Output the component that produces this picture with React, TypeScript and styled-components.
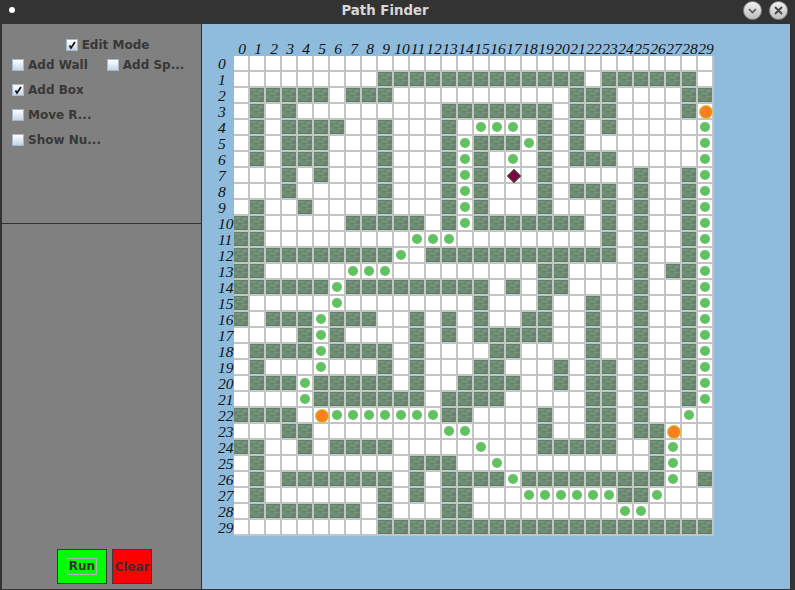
import React, { FC } from "react";
import styled, { createGlobalStyle } from "styled-components";

const MAZE = [
  "..............................",
  ".........WWWWWWWWWWWWW.WWWWWW.",
  ".WWWWW.WWW...........WWW....WW",
  ".W.W.........WWWWWWW.WWW....WO",
  ".W.WWWW..W...W.ooo.W.W.W.....o",
  ".W.WWW...W...WoWWWoW.W.......o",
  ".W.WWW...W...WoW.o.W.WWW.....o",
  "...W.W...W...WoW.D.W.....W..Wo",
  "...W.....W...WoW...W.WWW.W..Wo",
  ".W..W....W...WoW...W...W.W..Wo",
  "WW.....WWWWW.WoWWWWWWW.W.W..Wo",
  "WW.........ooo.........W.W..Wo",
  "WWWWWWWWWWo.WWWWWWWWWWWW.W..Wo",
  "WW.....ooo.........WW....W.WWo",
  "WWWWWWoWWWWWWWWW.W.WW....W..Wo",
  "W.....o........W...W..W..W..Wo",
  "W.WWWoWWW..W.W.W..WW..W..W..Wo",
  "....WoW....W.W.WWWWW..W..W..Wo",
  ".WWWWoWWWW.W....WW....W..W..Wo",
  ".W...o...W.W...WW...W.WW.W..Wo",
  ".WWWoWWWWW.W..WWWW..W.WW.W..Wo",
  "....oWWWWWWW.WWWW.....WW.W..Wo",
  "WWWW.OoooooooWW....W..WW.W..o.",
  "...WW........oo....W..WW.WWO..",
  "WW..W.WWWW.....o...WWWWW..Wo..",
  ".W.........WWW..o.........Wo..",
  ".W.WWWWWWW.W.WWWWoWWWWWWWWWo.W",
  ".W.......W.W.WW...ooooooWWo...",
  ".WWWWWWW.W...WW.........oo....",
  ".........WWWWWWWWWWWWWWWWWWWWW",
];

const GlobalStyle = createGlobalStyle`
  html, body {
    margin: 0;
    padding: 0;
    background: #333333;
  }
`;

const Frame = styled.div`
  width: 795px;
  height: 590px;
  display: flex;
  flex-direction: column;
  background: #333333;
  font-family: "DejaVu Sans", sans-serif;
  overflow: hidden;
`;

const TitleBar = styled.div`
  height: 24px;
  flex: none;
  display: flex;
  align-items: center;
  justify-content: space-between;
  padding: 0 7px 4px 9px;
  box-sizing: border-box;
`;

const MenuDot = styled.span`
  width: 6px;
  height: 6px;
  border-radius: 50%;
  background: #ffffff;
`;

const Title = styled.span`
  font-size: 13.3px;
  font-weight: 700;
  color: #d8d8d8;
  margin-left: 12px;
`;

const WindowButtons = styled.div`
  display: flex;
  gap: 7px;
`;

const WindowButton = styled.span`
  width: 19px;
  height: 19px;
  border-radius: 50%;
  background: linear-gradient(#f2f2f2, #bcbcbc);
  border: 1px solid #8c8c8c;
  box-sizing: border-box;
  display: flex;
  align-items: center;
  justify-content: center;
`;

const Body = styled.div`
  flex: 1;
  display: flex;
  padding: 0 5px 1px 2px;
  min-height: 0;
`;

const Sidebar = styled.div`
  width: 199px;
  flex: none;
  display: flex;
  flex-direction: column;
  border-right: 1px solid #2e2e2e;
`;

const OptionsPanel = styled.div`
  height: 200px;
  flex: none;
  box-sizing: border-box;
  background: #808080;
  border-bottom: 1px solid #333333;
  padding: 14px 10px 0;
  display: flex;
  flex-direction: column;
`;

const OptionRow = styled.div<{ $center?: boolean }>`
  height: ${(p) => (p.$center ? 14 : 25)}px;
  display: flex;
  align-items: center;
  justify-content: ${(p) => (p.$center ? "center" : "flex-start")};
  padding-left: ${(p) => (p.$center ? 12 : 0)}px;
  gap: 19px;
`;

const Option = styled.label`
  display: flex;
  align-items: center;
  gap: 4px;
  font-size: 12px;
  font-weight: 700;
  color: #383838;
  white-space: nowrap;
`;

const CheckBox = styled.span`
  width: 12px;
  height: 12px;
  box-sizing: border-box;
  border: 1px solid #a6b8ca;
  background: linear-gradient(#ffffff, #c3d6e8);
  display: flex;
  align-items: center;
  justify-content: center;
`;

const ActionPanel = styled.div`
  flex: 1;
  background: #808080;
  display: flex;
  align-items: flex-end;
  justify-content: flex-start;
  gap: 5px;
  padding: 0 0 5px 55px;
`;

const ActionButton = styled.button<{ $color: string; $w: number }>`
  width: ${(p) => p.$w}px;
  height: 35px;
  padding: 0;
  background: ${(p) => p.$color};
  border: 1px solid #3a3a3a;
  font-family: inherit;
  font-size: 12px;
  font-weight: 700;
  color: #333333;
  display: flex;
  align-items: center;
  justify-content: center;
`;

const FocusRing = styled.span`
  border: 1px solid #b0b0c0;
  padding: 0 1px 1px;
  line-height: 14px;
`;

const BoardArea = styled.div`
  flex: 1;
  background: #8fbbdc;
  padding: 17px 0 0 16px;
  box-sizing: border-box;
`;

const Board = styled.div`
  display: grid;
  grid-template-columns: repeat(31, 16px);
  grid-template-rows: 15px repeat(30, 16px);
`;

const Label = styled.span<{ $side?: boolean }>`
  font-family: "Liberation Serif", serif;
  font-style: italic;
  font-size: 15.5px;
  line-height: 16px;
  color: #111111;
  white-space: nowrap;
  display: flex;
  align-items: center;
  justify-content: ${(p) => (p.$side ? "flex-start" : "center")};
`;

const Cell = styled.div`
  width: 16px;
  height: 16px;
  box-sizing: border-box;
  border-right: 2px solid #c4c4c4;
  border-bottom: 2px solid #c4c4c4;
  background: #ffffff;
  display: flex;
  align-items: center;
  justify-content: center;
`;

const WallTile = styled.svg`
  width: 14px;
  height: 14px;
  display: block;
`;

const PathDot = styled.span`
  width: 10px;
  height: 10px;
  border-radius: 50%;
  background: #62c162;
`;

const EndPoint = styled.span`
  width: 14px;
  height: 14px;
  flex: none;
  box-sizing: border-box;
  border-radius: 50%;
  background: #ff7f20;
  border: 1px solid #b8d830;
  transform: translate(1px, 1px);
`;

const Robot = styled.span`
  width: 10px;
  height: 10px;
  flex: none;
  box-sizing: border-box;
  transform: translate(1px, 1px) rotate(45deg);
  background: #7c0a3c;
  border: 1.5px solid #444444;
`;

const Check: FC = () => (
  <svg width="10" height="10" viewBox="0 0 10 10">
    <path d="M2.500 5.500l1.500 2.500 4-6" fill="none" stroke="#111" strokeWidth="1.7" />
  </svg>
);

// one shared tile, the wall picture is a small mottled stone
const WallDefs: FC = () => (
  <svg width="0" height="0" style={{ position: "absolute" }}>
    <symbol id="wall" viewBox="0 0 14 14">
      <rect width="14" height="14" fill="#6c8a72" />
      <rect x="1" y="1" width="5" height="2" fill="#76937b" />
      <rect x="8" y="2" width="5" height="2" fill="#7a967f" />
      <rect x="3" y="5" width="7" height="1" fill="#7f9a83" />
      <rect x="0" y="8" width="4" height="2" fill="#75927a" />
      <rect x="7" y="8" width="6" height="1" fill="#78957d" />
      <rect x="4" y="11" width="6" height="1" fill="#76937b" />
      <rect x="0" y="4" width="3" height="2" fill="#64836b" />
      <rect x="6" y="3" width="3" height="1" fill="#63826a" />
      <rect x="10" y="5" width="4" height="2" fill="#64836b" />
      <rect x="4" y="7" width="3" height="2" fill="#63826a" />
      <rect x="1" y="11" width="3" height="2" fill="#65846c" />
      <rect x="10" y="10" width="3" height="3" fill="#65846c" />
      <rect width="14" height="1" fill="#62816a" />
      <rect y="13" width="14" height="1" fill="#62816a" />
    </symbol>
  </svg>
);

const renderCell = (c: string) => {
  if (c === "W") {
    return (
      <WallTile viewBox="0 0 14 14">
        <use href="#wall" />
      </WallTile>
    );
  }
  if (c === "o") return <PathDot />;
  if (c === "O") return <EndPoint />;
  if (c === "D") return <Robot />;
  return null;
};

const App: FC = () => {
  return (
    <Frame>
      <GlobalStyle />
      <WallDefs />
      <TitleBar>
        <MenuDot />
        <Title>Path Finder</Title>
        <WindowButtons>
          <WindowButton>
            <svg width="11" height="11" viewBox="0 0 11 11">
              <path d="M2 4l3.500 3.500L9 4" fill="none" stroke="#555" strokeWidth="1.6" />
            </svg>
          </WindowButton>
          <WindowButton>
            <svg width="11" height="11" viewBox="0 0 11 11">
              <path d="M2 2l7 7M9 2l-7 7" fill="none" stroke="#444" strokeWidth="1.8" />
            </svg>
          </WindowButton>
        </WindowButtons>
      </TitleBar>
      <Body>
        <Sidebar>
          <OptionsPanel>
            <OptionRow $center>
              <Option>
                <CheckBox>
                  <Check />
                </CheckBox>
                Edit Mode
              </Option>
            </OptionRow>
            <OptionRow>
              <Option>
                <CheckBox />
                Add Wall
              </Option>
              <Option>
                <CheckBox />
                Add Sp...
              </Option>
            </OptionRow>
            <OptionRow>
              <Option>
                <CheckBox>
                  <Check />
                </CheckBox>
                Add Box
              </Option>
            </OptionRow>
            <OptionRow>
              <Option>
                <CheckBox />
                Move R...
              </Option>
            </OptionRow>
            <OptionRow>
              <Option>
                <CheckBox />
                Show Nu...
              </Option>
            </OptionRow>
          </OptionsPanel>
          <ActionPanel>
            <ActionButton $color="#00ff00" $w={50}>
              <FocusRing>Run</FocusRing>
            </ActionButton>
            <ActionButton $color="#ff0000" $w={40}>
              Clear
            </ActionButton>
          </ActionPanel>
        </Sidebar>
        <BoardArea>
          <Board>
            <span />
            {MAZE.map((_, i) => (
              <Label key={i}>{i}</Label>
            ))}
            {MAZE.map((row, r) => (
              <React.Fragment key={r}>
                <Label $side>{r}</Label>
                {row.split("").map((c, i) => (
                  <Cell key={i}>{renderCell(c)}</Cell>
                ))}
              </React.Fragment>
            ))}
          </Board>
        </BoardArea>
      </Body>
    </Frame>
  );
};

export default App;
